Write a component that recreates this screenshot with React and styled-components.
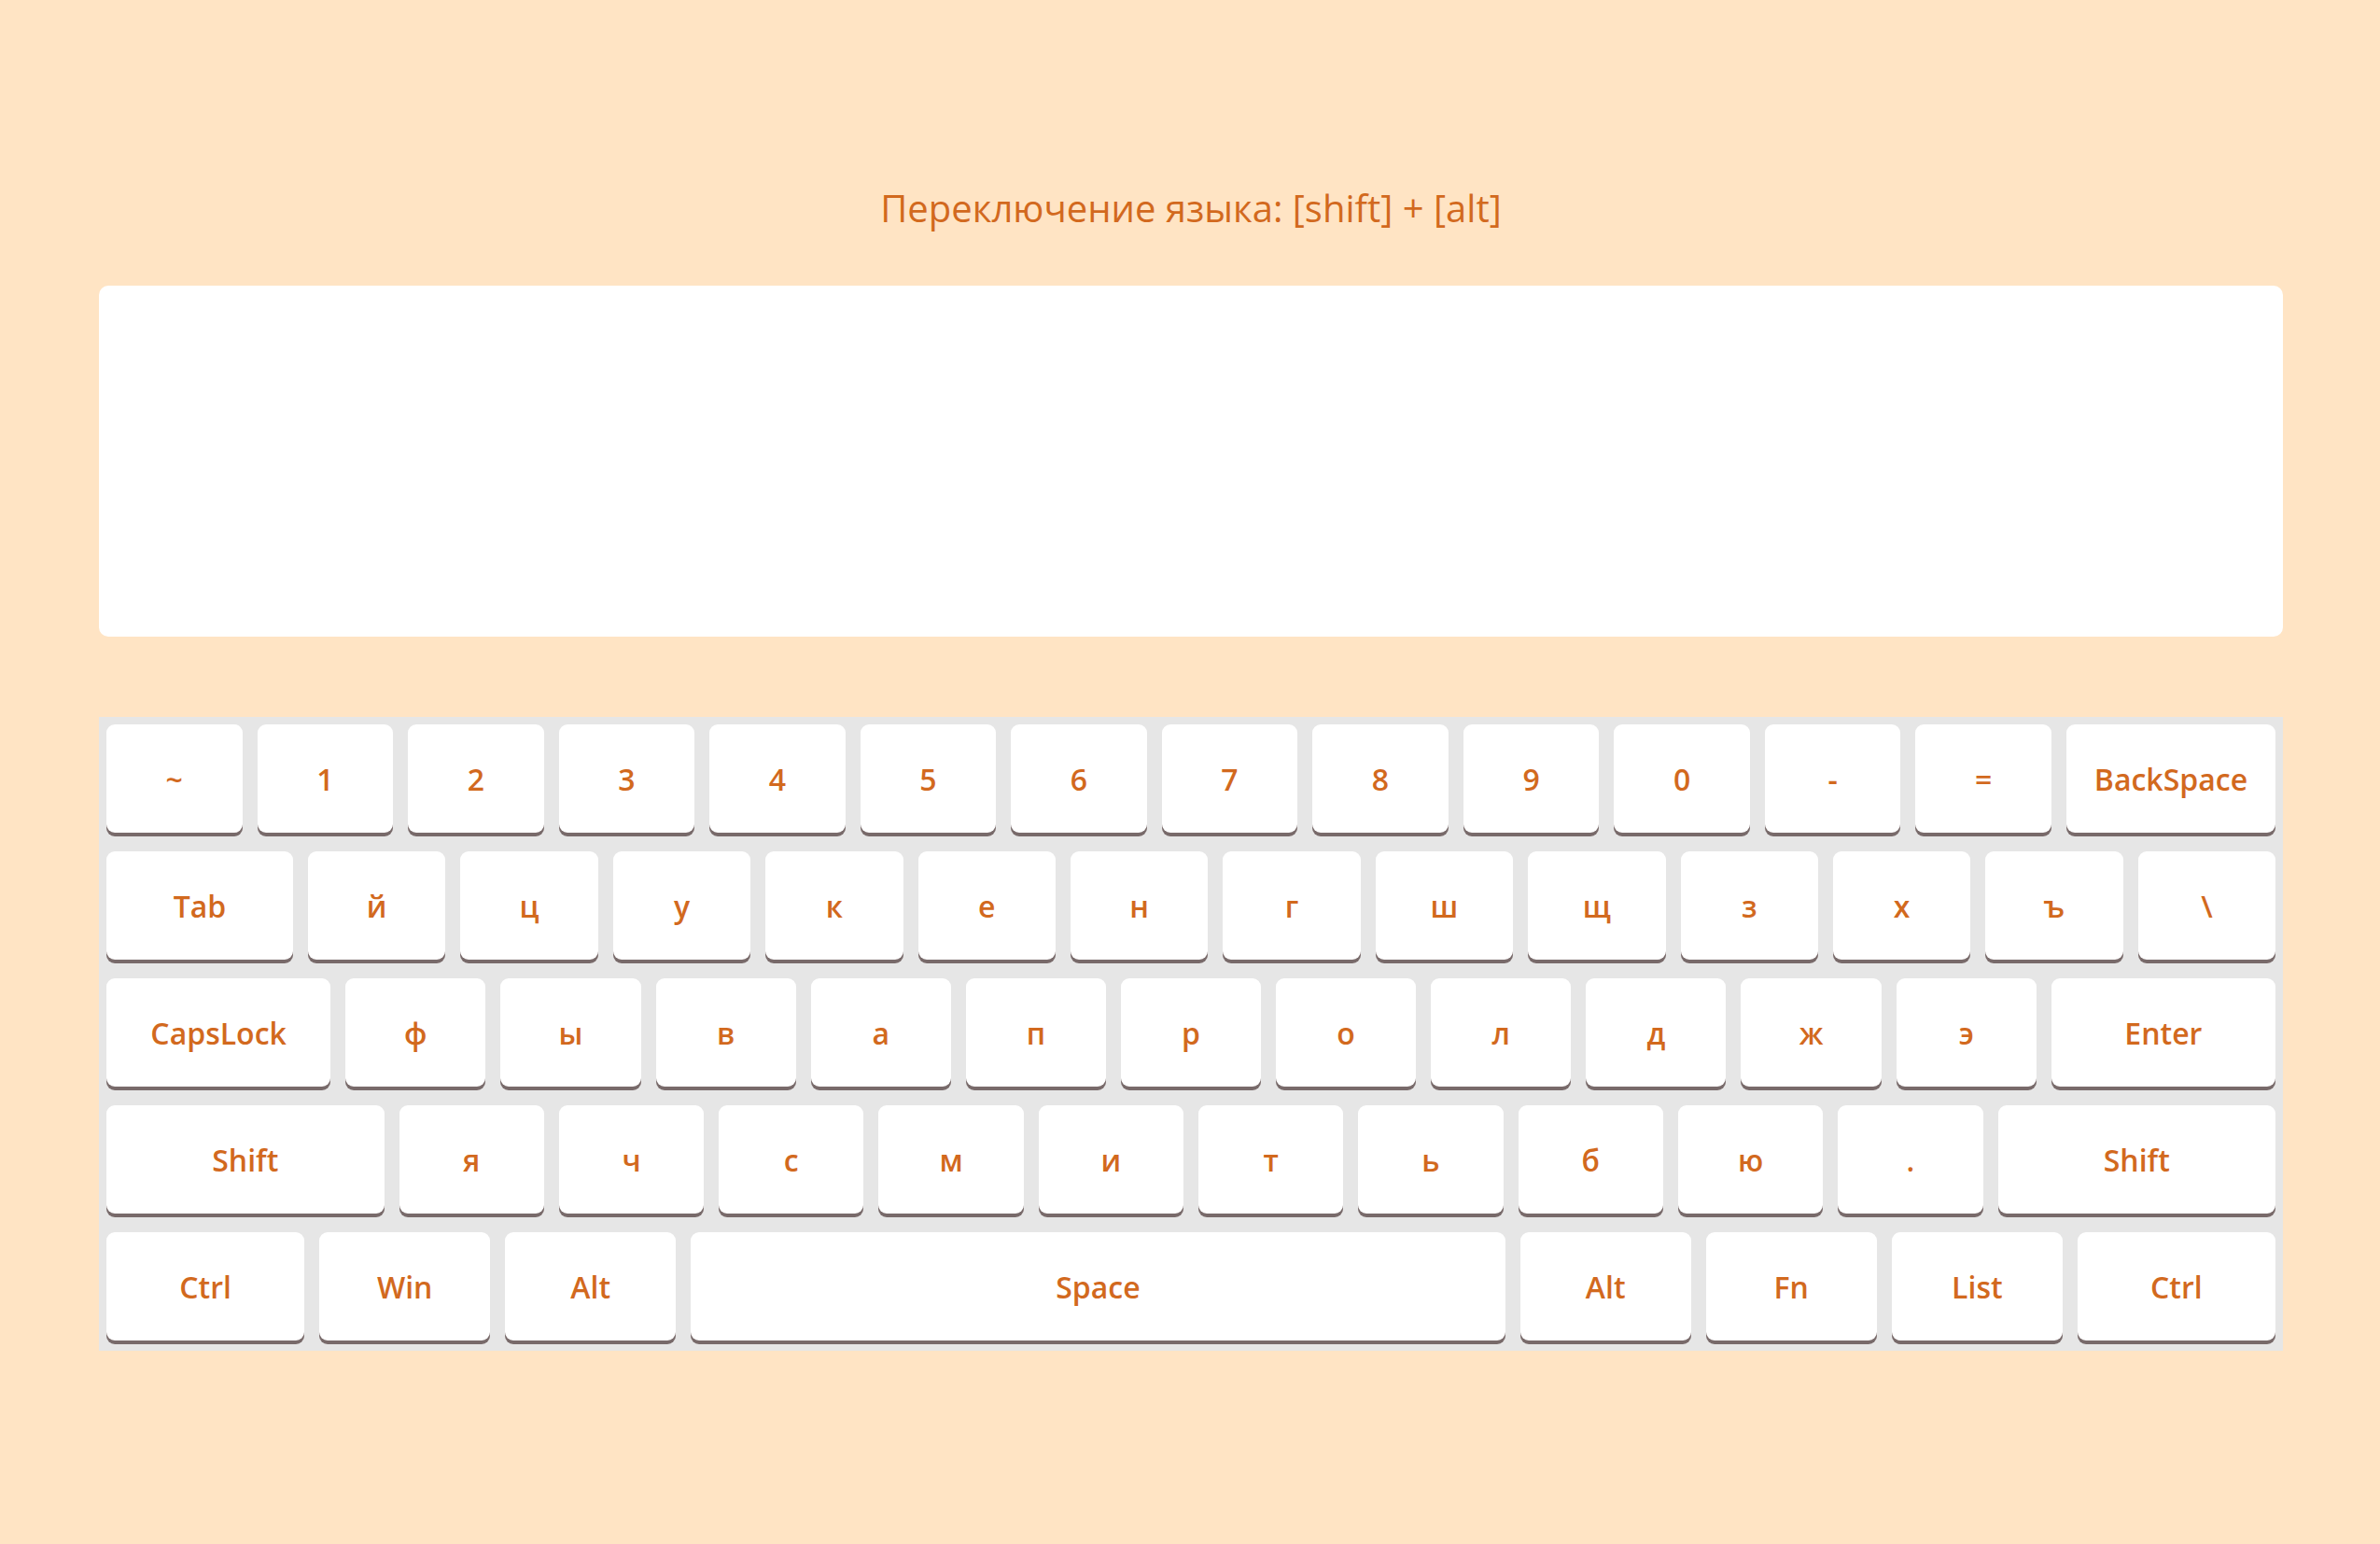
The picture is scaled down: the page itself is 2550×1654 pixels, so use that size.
import styled, { createGlobalStyle } from "styled-components";

const GlobalStyle = createGlobalStyle`
  html, body {
    margin: 0;
    padding: 0;
    background: #ffe4c4;
  }
  body {
    font-family: "Open Sans", "Noto Sans", sans-serif;
  }
`;

const Page = styled.div`
  min-height: 1654px;
  box-sizing: border-box;
  padding: 196px 104px 0 106px;
  background: #ffe4c4;
`;

const Title = styled.h1`
  margin: 0 0 56px;
  font-size: 40px;
  line-height: 54px;
  font-weight: 400;
  text-align: center;
  color: #d2691e;
`;

const TextArea = styled.textarea`
  display: block;
  width: 100%;
  height: 376px;
  box-sizing: border-box;
  border: none;
  border-radius: 10px;
  background: #fff;
  resize: none;
  outline: none;
  padding: 16px;
  font-family: inherit;
  font-size: 30px;
  color: #d2691e;
`;

const Keyboard = styled.div`
  margin-top: 86px;
  background: #e6e6e6;
  padding: 8px 8px 11px;
  display: flex;
  flex-direction: column;
  gap: 20px;
`;

const Row = styled.div`
  display: flex;
  gap: 16px;
`;

const Key = styled.button`
  flex: ${(p) => p.$w} 1 0;
  min-width: 0;
  height: 116px;
  border: none;
  border-radius: 9px;
  background: #fff;
  box-shadow: 0 4px 0 #786a6a;
  display: flex;
  align-items: center;
  justify-content: center;
  padding: 0;
  font-family: "Open Sans", "Noto Sans", sans-serif;
  font-size: 32px;
  font-weight: 600;
  color: #d2691e;
  cursor: pointer;
`;

const rows = [
  [
    ...["~", "1", "2", "3", "4", "5", "6", "7", "8", "9", "0", "-", "="].map(
      (k) => [k, 145.5]
    ),
    ["BackSpace", 224],
  ],
  [
    ["Tab", 200],
    ...["й", "ц", "у", "к", "е", "н", "г", "ш", "щ", "з", "х", "ъ", "\\"].map(
      (k) => [k, 147.4]
    ),
  ],
  [
    ["CapsLock", 240],
    ...["ф", "ы", "в", "а", "п", "р", "о", "л", "д", "ж", "э"].map((k) => [k, 150]),
    ["Enter", 240],
  ],
  [
    ["Shift", 297],
    ...["я", "ч", "с", "м", "и", "т", "ь", "б", "ю", "."].map((k) => [k, 155]),
    ["Shift", 297],
  ],
  [
    ["Ctrl", 212],
    ["Win", 183],
    ["Alt", 183],
    ["Space", 872],
    ["Alt", 183],
    ["Fn", 183],
    ["List", 183],
    ["Ctrl", 212],
  ],
];

const App = () => {
  return (
    <Page>
      <GlobalStyle />
      <Title>Переключение языка: [shift] + [alt]</Title>
      <TextArea />
      <Keyboard>
        {rows.map((row, i) => (
          <Row key={i}>
            {row.map(([label, w], j) => (
              <Key key={j} $w={w}>
                {label}
              </Key>
            ))}
          </Row>
        ))}
      </Keyboard>
    </Page>
  );
};

export default App;
